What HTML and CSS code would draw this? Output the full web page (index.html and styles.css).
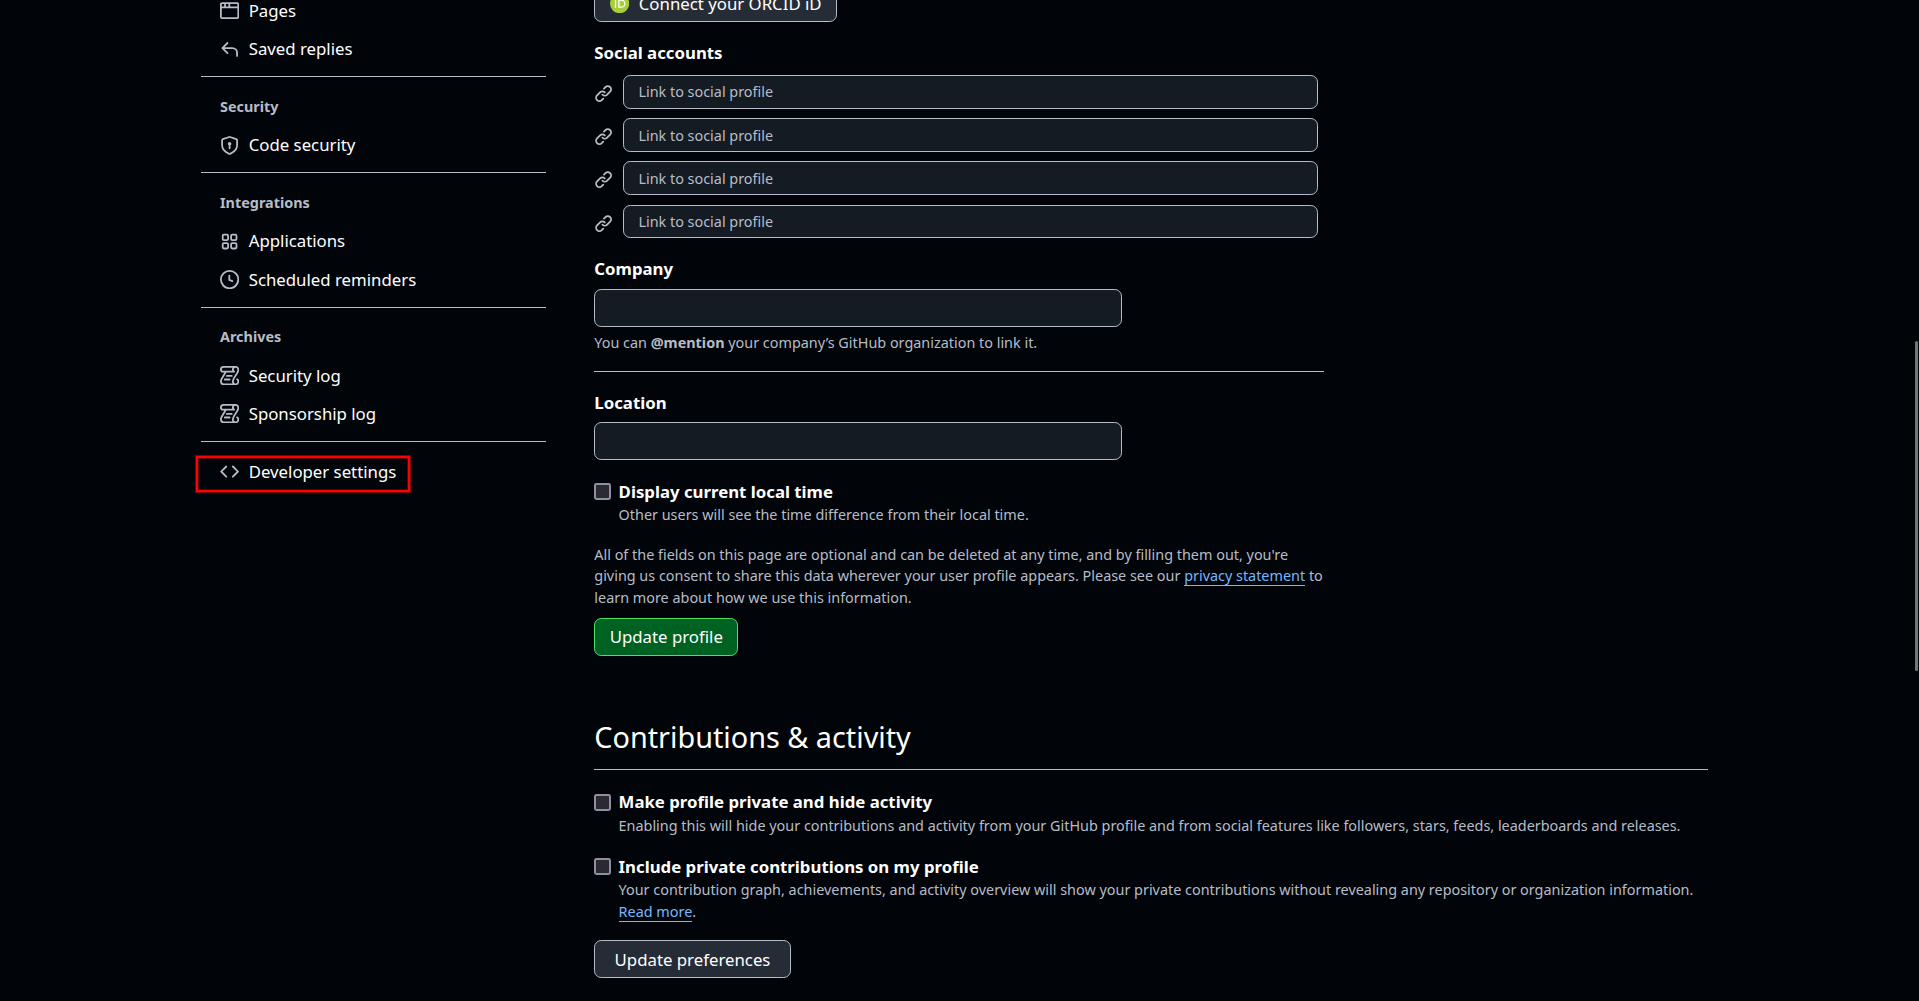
FILE: index.html
```html
<!DOCTYPE html>
<html lang="en">
<head>
<meta charset="utf-8">
<title>Your profile</title>
<link rel="stylesheet" href="styles.css">
</head>
<body>
<svg class="sprite" aria-hidden="true">
  <symbol id="i-browser" viewBox="0 0 16 16"><path d="M0 2.75C0 1.784.784 1 1.75 1h12.5c.966 0 1.75.784 1.75 1.75v10.5A1.75 1.75 0 0 1 14.25 15H1.75A1.75 1.75 0 0 1 0 13.25ZM14.5 6h-13v7.25c0 .138.112.25.25.25h12.5a.25.25 0 0 0 .25-.25Zm-6-3.5v2h6V2.75a.25.25 0 0 0-.25-.25ZM5 2.5v2h2v-2Zm-3.25 0a.25.25 0 0 0-.25.25V4.5h2v-2Z"/></symbol>
  <symbol id="i-reply" viewBox="0 0 16 16"><path d="M6.78 1.97a.75.75 0 0 1 0 1.06L3.81 6h6.44A4.75 4.75 0 0 1 15 10.75v2.5a.75.75 0 0 1-1.5 0v-2.5a3.25 3.25 0 0 0-3.25-3.25H3.81l2.97 2.97a.749.749 0 0 1-.326 1.275.749.749 0 0 1-.734-.215L1.47 7.28a.75.75 0 0 1 0-1.06l4.25-4.25a.75.75 0 0 1 1.06 0Z"/></symbol>
  <symbol id="i-shield" viewBox="0 0 16 16"><path d="m8.533.133 5.25 1.68A1.75 1.75 0 0 1 15 3.48V7c0 1.566-.32 3.182-1.303 4.682-.983 1.498-2.585 2.813-5.032 3.855a1.697 1.697 0 0 1-1.33 0c-2.447-1.042-4.049-2.357-5.032-3.855C1.32 10.182 1 8.566 1 7V3.48a1.75 1.75 0 0 1 1.217-1.667l5.25-1.68a1.748 1.748 0 0 1 1.066 0Zm-.61 1.429.001.001-5.25 1.68a.251.251 0 0 0-.174.237V7c0 1.36.275 2.666 1.057 3.859.784 1.194 2.121 2.342 4.366 3.298a.196.196 0 0 0 .154 0c2.245-.957 3.582-2.103 4.366-3.297C13.225 9.666 13.5 8.358 13.5 7V3.48a.25.25 0 0 0-.174-.238l-5.25-1.68a.25.25 0 0 0-.153 0ZM9.5 6.5c0 .536-.286 1.032-.75 1.3v2.45a.75.75 0 0 1-1.5 0V7.8A1.5 1.5 0 1 1 9.5 6.5Z"/></symbol>
  <symbol id="i-apps" viewBox="0 0 16 16"><g fill="none" stroke="currentColor" stroke-width="1.5"><rect x="2.25" y="2.25" width="4.5" height="4.5" rx="1"/><rect x="9.25" y="2.25" width="4.5" height="4.5" rx="1"/><rect x="2.25" y="9.25" width="4.5" height="4.5" rx="1"/><rect x="9.25" y="9.25" width="4.5" height="4.5" rx="1"/></g></symbol>
  <symbol id="i-clock" viewBox="0 0 16 16"><path d="M8 0a8 8 0 1 1 0 16A8 8 0 0 1 8 0ZM1.5 8a6.5 6.5 0 1 0 13 0 6.5 6.5 0 0 0-13 0Zm7-3.25v2.992l2.028.812a.75.75 0 0 1-.557 1.392l-2.5-1A.751.751 0 0 1 7 8.25v-3.5a.75.75 0 0 1 1.5 0Z"/></symbol>
  <symbol id="i-log" viewBox="0 0 16 16"><path d="M5 8.25a.75.75 0 0 1 .75-.75h4a.75.75 0 0 1 0 1.5h-4A.75.75 0 0 1 5 8.25ZM4 10.5A.75.75 0 0 0 4 12h4a.75.75 0 0 0 0-1.5H4Z"/><path d="M13-.005c1.654 0 3 1.328 3 3 0 .982-.338 1.933-.783 2.818-.443.879-1.028 1.758-1.582 2.588l-.011.017c-.568.853-1.104 1.659-1.501 2.446-.398.789-.623 1.494-.623 2.136a1.5 1.5 0 1 0 2.333-1.248.75.75 0 0 1 .834-1.246A3 3 0 0 1 13 16H3a3 3 0 0 1-3-3c0-1.582.891-3.135 1.777-4.506.209-.322.418-.637.623-.946.473-.709.923-1.386 1.287-2.048H2.51c-.576 0-1.381-.133-1.907-.783A2.68 2.68 0 0 1 0 2.995a3 3 0 0 1 3-3Zm0 1.5a1.5 1.5 0 0 0-1.5 1.5c0 .476.223.834.667 1.132A.75.75 0 0 1 11.75 5.5H5.368c-.467 1.003-1.141 2.015-1.773 2.963-.192.289-.381.571-.558.845C2.13 10.711 1.5 11.916 1.5 13A1.5 1.5 0 0 0 3 14.5h7.401A2.989 2.989 0 0 1 10 13c0-.979.338-1.928.784-2.812.441-.874 1.023-1.748 1.575-2.576l.017-.026c.568-.853 1.103-1.658 1.501-2.448.398-.79.623-1.497.623-2.143 0-.838-.669-1.5-1.5-1.5Zm-10 0a1.5 1.5 0 0 0-1.5 1.5c0 .321.1.569.27.778.097.12.325.227.74.227h7.674A2.737 2.737 0 0 1 10 2.995c0-.546.146-1.059.401-1.5Z"/></symbol>
  <symbol id="i-code" viewBox="0 0 16 16"><path d="m11.28 3.22 4.25 4.25a.75.75 0 0 1 0 1.06l-4.25 4.25a.749.749 0 0 1-1.275-.326.749.749 0 0 1 .215-.734L13.94 8l-3.72-3.72a.749.749 0 0 1 .326-1.275.749.749 0 0 1 .734.215Zm-6.56 0a.751.751 0 0 1 1.042.018.751.751 0 0 1 .018 1.042L2.06 8l3.72 3.72a.749.749 0 0 1-.326 1.275.749.749 0 0 1-.734-.215L.47 8.53a.75.75 0 0 1 0-1.06Z"/></symbol>
  <symbol id="i-link" viewBox="0 0 16 16"><path d="m7.775 3.275 1.25-1.25a3.5 3.5 0 1 1 4.95 4.95l-2.5 2.5a3.5 3.5 0 0 1-4.95 0 .751.751 0 0 1 .018-1.042.751.751 0 0 1 1.042-.018 1.998 1.998 0 0 0 2.83 0l2.5-2.5a2.002 2.002 0 0 0-2.83-2.83l-1.25 1.25a.751.751 0 0 1-1.042-.018.751.751 0 0 1-.018-1.042Zm-4.69 9.64a1.998 1.998 0 0 0 2.83 0l1.25-1.25a.751.751 0 0 1 1.042.018.751.751 0 0 1 .018 1.042l-1.25 1.25a3.5 3.5 0 1 1-4.95-4.95l2.5-2.5a3.5 3.5 0 0 1 4.95 0 .751.751 0 0 1-.018 1.042.751.751 0 0 1-1.042.018 1.998 1.998 0 0 0-2.83 0l-2.5 2.5a1.998 1.998 0 0 0 0 2.83Z"/></symbol>
</svg>
<div class="layout">
  <nav class="sidebar">
    <a class="item"><svg class="icon"><use href="#i-browser"/></svg>Pages</a>
    <a class="item"><svg class="icon"><use href="#i-reply"/></svg>Saved replies</a>
    <hr class="divider">
    <h3 class="group">Security</h3>
    <a class="item"><svg class="icon"><use href="#i-shield"/></svg>Code security</a>
    <hr class="divider">
    <h3 class="group">Integrations</h3>
    <a class="item"><svg class="icon"><use href="#i-apps"/></svg>Applications</a>
    <a class="item"><svg class="icon"><use href="#i-clock"/></svg>Scheduled reminders</a>
    <hr class="divider">
    <h3 class="group">Archives</h3>
    <a class="item log"><svg class="icon"><use href="#i-log"/></svg>Security log</a>
    <a class="item"><svg class="icon"><use href="#i-log"/></svg>Sponsorship log</a>
    <hr class="divider">
    <a class="item marked"><svg class="icon"><use href="#i-code"/></svg>Developer settings</a>
  </nav>
  <main class="content">
    <form class="profile">
      <button type="button" class="btn btn-orcid"><svg class="orcid" viewBox="0 0 16 16"><circle cx="8" cy="8" r="8" fill="#a6ce39"/><g fill="none" stroke="#fff" stroke-width="1.1"><path d="M4.6 5v6.5M7.4 5.1h2a2.95 2.95 0 0 1 0 5.9H7.4Z"/></g><circle cx="4.6" cy="3.6" r=".7" fill="#fff"/></svg>Connect your ORCID iD</button>
      <h4 class="label social-label">Social accounts</h4>
      <div class="social">
        <div class="social-row"><svg class="icon"><use href="#i-link"/></svg><input class="input small" placeholder="Link to social profile"></div>
        <div class="social-row"><svg class="icon"><use href="#i-link"/></svg><input class="input small" placeholder="Link to social profile"></div>
        <div class="social-row"><svg class="icon"><use href="#i-link"/></svg><input class="input small" placeholder="Link to social profile"></div>
        <div class="social-row"><svg class="icon"><use href="#i-link"/></svg><input class="input small" placeholder="Link to social profile"></div>
      </div>
      <h4 class="label company-label">Company</h4>
      <input class="input field">
      <p class="note company-note">You can <strong>@mention</strong> your company’s GitHub organization to link it.</p>
      <hr class="rule">
      <h4 class="label location-label">Location</h4>
      <input class="input field">
      <div class="check time-check">
        <span class="box"></span>
        <div><h4 class="label">Display current local time</h4><p class="note">Other users will see the time difference from their local time.</p></div>
      </div>
      <p class="note consent">All of the fields on this page are optional and can be deleted at any time, and by filling them out, you're giving us consent to share this data wherever your user profile appears. Please see our <a class="link">privacy statement</a> to learn more about how we use this information.</p>
      <button type="button" class="btn btn-primary">Update profile</button>
    </form>
    <h2 class="heading">Contributions &amp; activity</h2>
    <div class="check private-check">
      <span class="box"></span>
      <div><h4 class="label">Make profile private and hide activity</h4><p class="note">Enabling this will hide your contributions and activity from your GitHub profile and from social features like followers, stars, feeds, leaderboards and releases.</p></div>
    </div>
    <div class="check include-check">
      <span class="box"></span>
      <div><h4 class="label">Include private contributions on my profile</h4><p class="note">Your contribution graph, achievements, and activity overview will show your private contributions without revealing any repository or organization information. <a class="link">Read more</a>.</p></div>
    </div>
    <button type="button" class="btn btn-prefs">Update preferences</button>
  </main>
</div>
<div class="scroll-thumb"></div>
</body>
</html>
```
FILE: styles.css
```css
*, *::after { box-sizing: border-box; }
html { height: 100%; background: #010409; }
body {
  margin: 0;
  height: 1001px;
  overflow: hidden;
  position: relative;
  background: #010409;
  color: #ffffff;
  font: 16.8px/25.2px "Noto Sans", sans-serif;
}
h2, h3, h4, p { margin: 0; }
.sprite { display: none; }
.layout { display: flex; gap: 48.3px; margin-left: 201px; }

/* sidebar */
.sidebar { width: 345px; margin-top: -8.4px; flex: none; }
.item {
  display: flex;
  align-items: center;
  gap: 9.5px;
  height: 38.4px;
  padding-left: 19px;
  line-height: 24px;
}
.icon { width: 19.2px; height: 19.2px; flex: none; fill: currentColor; color: #b7bdc8; }
.divider { height: 1px; border: 0; margin: 7.8px 0 10.4px; background: #b7bdc8; }
.group {
  height: 38.4px;
  padding-left: 19px;
  font-size: 14.4px;
  line-height: 38.6px;
  font-weight: 700;
  color: #b7bdc8;
}
.log { padding-top: .6px; }
.marked { position: relative; padding-top: .9px; }
.marked .icon { margin-top: -1.2px; }
.marked::after {
  content: "";
  position: absolute;
  left: -5px;
  top: 4px;
  width: 214px;
  height: 36px;
  border: 2px solid #ff0000;
  box-shadow: 0 0 0 1px #7b0204, inset 0 0 0 1px #5c0103;
}

/* main column */
.content { width: 1114px; margin-top: -16px; }
.profile { width: 730px; display: flex; flex-direction: column; align-items: flex-start; }
.label { font-size: 16.8px; line-height: 25.2px; font-weight: 700; }
.note { font-size: 14.4px; line-height: 21.6px; color: #b7bdc8; }
.note strong { font-weight: 700; }
.btn {
  display: flex;
  align-items: center;
  justify-content: center;
  height: 38.4px;
  padding: 0;
  border: 1px solid #b7bdc8;
  border-radius: 7.2px;
  background: #262c36;
  color: #ffffff;
  font: 16.8px/25.2px "Noto Sans", sans-serif;
}
.btn-orcid { width: 243px; gap: 9.6px; }
.orcid { width: 19.2px; height: 19.2px; }
.btn-primary { width: 144px; margin-top: 9.2px; background: #006222; border-color: #4ae168; }
.btn-prefs { width: 197px; margin-top: 17.6px; padding: 1px .6px 0 0; }
.input {
  border: 1px solid #b7bdc8;
  border-radius: 7.2px;
  background: #151b23;
  color: #ffffff;
  padding: 0 14.4px;
  font: 14.4px/21.6px "Noto Sans", sans-serif;
}
.input::placeholder { color: #b7bdc8; opacity: 1; }
.small { width: 695px; height: 33.6px; padding-top: .4px; }
.field { width: 528px; height: 38.4px; }
.social-label { margin-top: 18px; }
.social { display: flex; flex-direction: column; gap: 9.6px; margin-top: 9.4px; }
.social-row { display: flex; align-items: center; gap: 9.5px; }
.social-row .icon { margin-top: 3.8px; }
.company-label { margin: 18px 0 7.2px; }
.company-note { margin-top: 4.8px; }
.rule { width: 100%; height: 1px; border: 0; margin: 17.6px 0; background: #b7bdc8; }
.location-label { margin-bottom: 7.2px; }
.check { display: flex; gap: 7.3px; }
.box {
  flex: none;
  width: 17px;
  height: 17px;
  margin-top: 4.6px;
  border: 2px solid #8f8f9d;
  border-radius: 2.4px;
  background: #2b2a33;
}
.time-check { margin-top: 18.4px; }
.consent { margin-top: 18.2px; }
.link { color: #74b9ff; border-bottom: 1px solid #74b9ff; }
.heading {
  margin-top: 59.4px;
  height: 54.4px;
  border-bottom: 1px solid #b7bdc8;
  font-size: 28.8px;
  line-height: 44.4px;
  font-weight: 400;
}
.private-check { margin-top: 19.2px; }
.private-check .note { margin-top: .6px; }
.include-check { margin-top: 17.4px; }

.scroll-thumb {
  position: absolute;
  left: 1915px;
  top: 341px;
  width: 3px;
  height: 330px;
  border-radius: 1.5px;
  background: #757575;
}
```
